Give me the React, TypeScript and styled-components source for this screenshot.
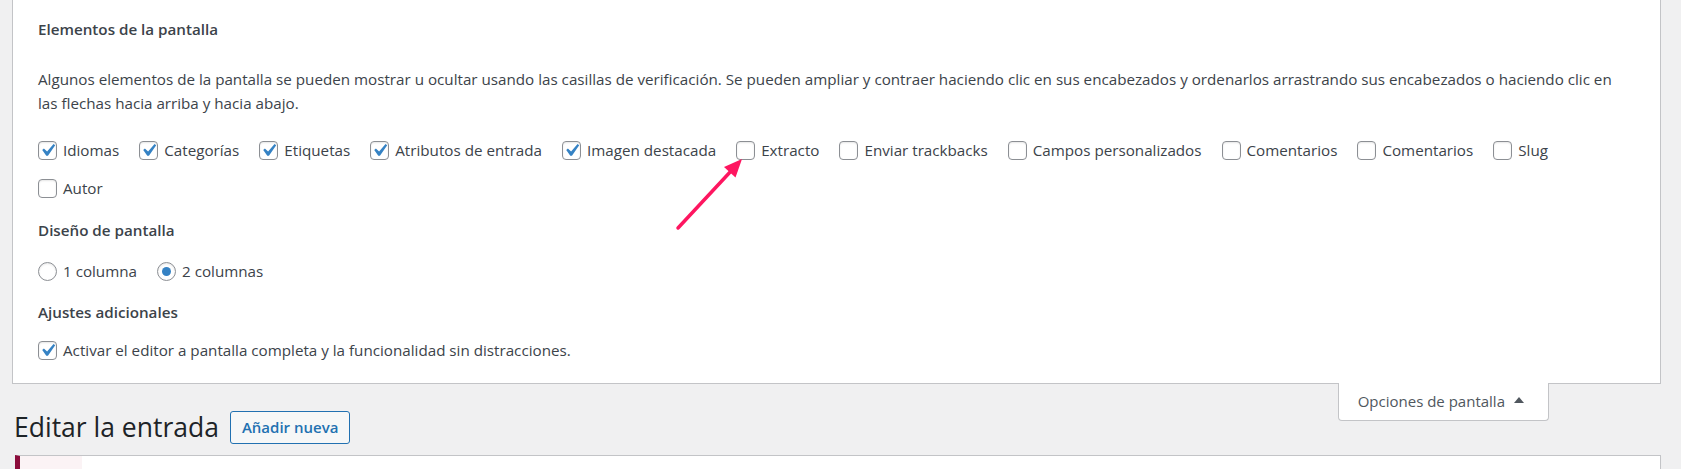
import React from 'react';
import styled, { createGlobalStyle } from 'styled-components';

const GlobalStyle = createGlobalStyle`
    html, body {
        margin: 0;
        padding: 0;
        background: #f0f0f1;
    }

    body {
        font-family: 'Open Sans', 'Noto Sans', sans-serif;
        color: #3c434a;
        overflow: hidden;
    }
`;

const Page = styled.div`
    position: relative;
    padding: 0 20px 0 12px;
    height: 469px;
    box-sizing: border-box;
    overflow: hidden;
`;

const Panel = styled.div`
    background: #fff;
    border: 1px solid #c3c4c7;
    border-top: 0;
    padding: 19px 30px 14px 25px;
`;

const Legend = styled.h5<{ $top?: number }>`
    margin: ${(p) => p.$top ?? 0}px 0 0;
    font-size: 15.2px;
    line-height: 20px;
    font-weight: 600;
    color: #3c434a;
`;

const Description = styled.p`
    margin: 28px 0 0;
    font-size: 15.2px;
    line-height: 24px;
`;

const OptionList = styled.div<{ $top?: number }>`
    display: flex;
    flex-wrap: wrap;
    column-gap: 20px;
    margin-top: ${(p) => p.$top ?? 0}px;
`;

const Option = styled.label`
    display: inline-flex;
    align-items: center;
    gap: 6px;
    height: 38px;
    font-size: 15.2px;
    color: #3c434a;
    white-space: nowrap;
`;

const Box = styled.span<{ $round?: boolean }>`
    position: relative;
    flex: none;
    width: 17px;
    height: 17px;
    border: 1px solid #8c8f94;
    border-radius: ${(p) => (p.$round ? '50%' : '4px')};
    background: #fff;
    box-shadow: inset 0 1px 2px rgba(0, 0, 0, 0.1);
`;

const Tick = styled.svg`
    position: absolute;
    left: -4px;
    top: -4px;
    width: 25px;
    height: 25px;
    fill: #3582c4;
`;

const Dot = styled.span`
    position: absolute;
    left: 4px;
    top: 4px;
    width: 9px;
    height: 9px;
    border-radius: 50%;
    background: #3582c4;
`;

const Arrow = styled.svg`
    position: absolute;
    left: 0;
    top: 0;
    width: 1681px;
    height: 469px;
    pointer-events: none;
`;

const HeaderRow = styled.div`
    display: flex;
    justify-content: space-between;
    align-items: flex-start;
`;

const TitleGroup = styled.div`
    display: flex;
    align-items: center;
    margin: 26px 0 0 2px;
`;

const Title = styled.h1`
    margin: 0;
    font-size: 26.5px;
    line-height: 34.5px;
    font-weight: 400;
    color: #1d2327;
`;

const AddButton = styled.a`
    display: inline-flex;
    align-items: center;
    box-sizing: border-box;
    height: 33px;
    margin-left: 11px;
    padding: 0 11px;
    border: 1px solid #2271b1;
    border-radius: 3px;
    background: #f6f7f7;
    color: #2271b1;
    font-size: 15px;
    font-weight: 600;
    text-decoration: none;
`;

const ScreenTab = styled.button`
    display: flex;
    align-items: center;
    box-sizing: border-box;
    height: 38px;
    margin: -1px 112px 0 0;
    padding: 0 19px 1px 19px;
    border: 1px solid #c3c4c7;
    border-top: 0;
    border-radius: 0 0 4px 4px;
    background: #fff;
    color: #50575e;
    font-family: inherit;
    font-size: 15px;
`;

const Caret = styled.span`
    display: flex;
    align-items: center;
    justify-content: center;
    width: 20px;
    height: 20px;
    margin-left: 4px;

    &::after {
        content: '';
        border-left: 5px solid transparent;
        border-right: 5px solid transparent;
        border-bottom: 6px solid #50575e;
        margin-top: -2px;
    }
`;

const Notice = styled.div`
    display: flex;
    height: 40px;
    margin: 10px 0 0 3px;
    background: #fff;
    border: 1px solid #c3c4c7;
    border-left: 5px solid #8b0c3b;
    box-shadow: 0 1px 1px rgba(0, 0, 0, 0.04);
`;

const NoticeIcon = styled.div`
    width: 62px;
    background: #fbf3f5;
`;

type Item = { label: string; checked?: boolean };

const screenItems: Item[] = [
    { label: 'Idiomas', checked: true },
    { label: 'Categorías', checked: true },
    { label: 'Etiquetas', checked: true },
    { label: 'Atributos de entrada', checked: true },
    { label: 'Imagen destacada', checked: true },
    { label: 'Extracto' },
    { label: 'Enviar trackbacks' },
    { label: 'Campos personalizados' },
    { label: 'Comentarios' },
    { label: 'Comentarios' },
    { label: 'Slug' },
    { label: 'Autor' },
];

const Checkbox: React.FC<Item> = ({ label, checked }) => (
    <Option>
        <Box>
            {checked && (
                <Tick viewBox="0 0 20 20">
                    <path d="M14.83 4.89l1.34.94-5.81 8.38H9.02L5.78 9.67l1.34-1.25 2.57 2.4z" />
                </Tick>
            )}
        </Box>
        {label}
    </Option>
);

const Radio: React.FC<Item> = ({ label, checked }) => (
    <Option>
        <Box $round>{checked && <Dot />}</Box>
        {label}
    </Option>
);

const App: React.FC = () => {
    return (
        <Page>
            <GlobalStyle />
            <Panel>
                <Legend>Elementos de la pantalla</Legend>
                <Description>
                    Algunos elementos de la pantalla se pueden mostrar u ocultar usando las casillas de
                    verificación. Se pueden ampliar y contraer haciendo clic en sus encabezados y ordenarlos
                    arrastrando sus encabezados o haciendo clic en las flechas hacia arriba y hacia abajo.
                </Description>
                <OptionList $top={16}>
                    {screenItems.map((item, i) => (
                        <Checkbox key={i} {...item} />
                    ))}
                </OptionList>

                <Legend $top={13}>Diseño de pantalla</Legend>
                <OptionList $top={12}>
                    <Radio label="1 columna" />
                    <Radio label="2 columnas" checked />
                </OptionList>

                <Legend $top={12}>Ajustes adicionales</Legend>
                <OptionList $top={9}>
                    <Checkbox
                        label="Activar el editor a pantalla completa y la funcionalidad sin distracciones."
                        checked
                    />
                </OptionList>
            </Panel>

            <HeaderRow>
                <TitleGroup>
                    <Title>Editar la entrada</Title>
                    <AddButton href="#">Añadir nueva</AddButton>
                </TitleGroup>
                <ScreenTab>
                    Opciones de pantalla
                    <Caret />
                </ScreenTab>
            </HeaderRow>

            <Notice>
                <NoticeIcon />
            </Notice>

            <Arrow viewBox="0 0 1681 469">
                <line x1="678" y1="228" x2="732" y2="170" stroke="#fe1660" strokeWidth="3.5" strokeLinecap="round" />
                <polygon points="742,159 735.5,177.5 724,167" fill="#fe1660" />
            </Arrow>
        </Page>
    );
};

export default App;
